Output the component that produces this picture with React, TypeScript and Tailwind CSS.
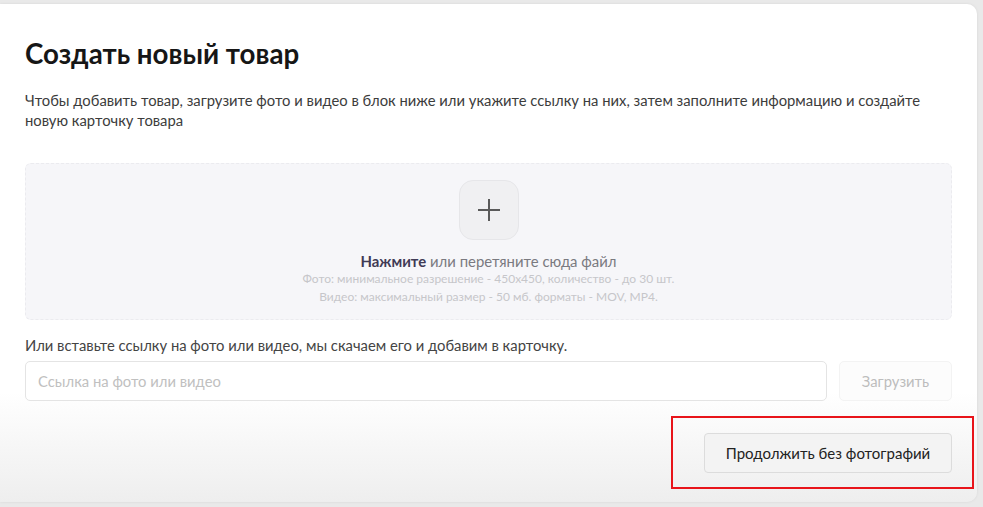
import React from "react";

export default function App() {
  return (
    <div
      className="w-[983px] h-[507px] bg-[#e9e9e9] pt-[4px] pb-[5px] pr-[6px] overflow-hidden"
      style={{ fontFamily: "Lato, 'Open Sans', sans-serif" }}
    >
      <div className="relative h-full rounded-r-[10px] bg-linear-to-b from-white from-[78%] to-[#eeeeee] shadow-[0_0_3px_rgba(0,0,0,0.08)] pl-[25px] pr-[25px] flex flex-col">
        <h1 className="mt-[34px] text-[27.7px] leading-[32px] font-bold text-[#161616]">
          Создать новый товар
        </h1>
        <p className="mt-[20px] text-[14.8px] leading-[20px] text-[#3c3c3c] w-[915px]">
          Чтобы добавить товар, загрузите фото и видео в блок ниже или укажите ссылку на них, затем заполните информацию и создайте новую карточку товара
        </p>
        <div className="mt-[33px] h-[157px] rounded-[6px] bg-[#f6f6f9] border border-dashed border-[#ebebef] flex flex-col items-center">
          <div className="mt-[16px] w-[60px] h-[60px] rounded-[14px] bg-[#f0f0f2] border border-[#e6e6e9] flex items-center justify-center">
            <svg width="28" height="28" viewBox="0 0 28 28" fill="none">
              <path d="M14 3v22M3 14h22" stroke="#5a5a5a" strokeWidth="2" />
            </svg>
          </div>
          <div className="mt-[12px] text-[14.9px] leading-[18px] text-[#7a7a80]">
            <span className="font-bold text-[#403a55]">Нажмите</span> или перетяните сюда файл
          </div>
          <div className="text-[12px] leading-[18px] text-[#c6c6ca] text-center">
            Фото: минимальное разрешение - 450x450, количество - до 30 шт.
            <br />
            Видео: максимальный размер - 50 мб. форматы - MOV, MP4.
          </div>
        </div>
        <div className="mt-[15px] text-[14.8px] leading-[20px] text-[#444]">
          Или вставьте ссылку на фото или видео, мы скачаем его и добавим в карточку.
        </div>
        <div className="mt-[6px] flex gap-[12px]">
          <div className="w-[802px] h-[40px] rounded-[5px] border border-[#e4e4e4] bg-white flex items-center pl-[12px] text-[14.8px] text-[#c0c0c0]">
            Ссылка на фото или видео
          </div>
          <div className="w-[113px] h-[40px] rounded-[5px] border border-[#f3f3f3] bg-[#fcfcfc] flex items-center justify-center text-[14.8px] text-[#bdbdbd]">
            Загрузить
          </div>
        </div>
        <div className="mt-[32px] flex justify-end">
          <div className="w-[248px] h-[40px] rounded-[4px] border border-[#dcdcdc] bg-[#f3f3f3] flex items-center justify-center text-[15px] text-[#222]">
            Продолжить без фотографий
          </div>
        </div>
        <div className="absolute left-[671px] top-[412px] w-[303px] h-[73px] border-2 border-[#e8141a]" />
      </div>
    </div>
  );
}
